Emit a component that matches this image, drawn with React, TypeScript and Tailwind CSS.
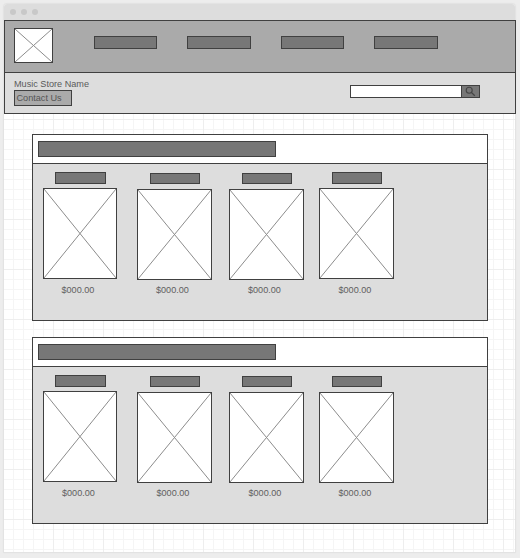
import React from "react";

type Product = {
  card: string;
  label: string;
  image: string;
  price: string;
};

const frame = "border border-[#404040]";
const bar = "border border-[#404040] bg-[#777]";

function Placeholder({ className }: { className: string }) {
  return (
    <div className={`${frame} shrink-0 bg-white ${className}`}>
      <svg className="block h-full w-full" viewBox="0 0 100 100" preserveAspectRatio="none">
        <path
          d="M0 0L100 100M100 0L0 100"
          stroke="#8c8c8c"
          strokeWidth="1"
          vectorEffect="non-scaling-stroke"
          fill="none"
        />
      </svg>
    </div>
  );
}

function ProductPanel({ products, className }: { products: Product[]; className: string }) {
  return (
    <section className={`${frame} ml-[28px] h-[187px] w-[456px] bg-[#ddd] ${className}`}>
      <div className="h-[28px] bg-white pt-[6px] pl-[5px]">
        <div className={`${bar} h-[16px] w-[238px]`} />
      </div>
      <div className="flex h-[157px] items-start border-t border-[#404040] pl-[10px]">
        {products.map((p, i) => (
          <div key={i} className={`shrink-0 ${p.card}`}>
            <div className={`${bar} ${p.label}`} />
            <Placeholder className={`h-[91px] w-full ${p.image}`} />
            <p className={`h-[12px] text-[9.1px] leading-[12px] whitespace-nowrap text-[#606060] ${p.price}`}>
              $000.00
            </p>
          </div>
        ))}
      </div>
    </section>
  );
}

const featured: Product[] = [
  { card: "w-[74px] pt-[8px]", label: "ml-[12px] h-[12px] w-[51px]", image: "mt-[4px]", price: "mt-[5px] pl-[18.5px]" },
  { card: "ml-[20px] w-[75px] pt-[9px]", label: "ml-[13px] h-[11px] w-[50px]", image: "mt-[5px]", price: "mt-[4px] pl-[19px]" },
  { card: "ml-[17px] w-[75px] pt-[9px]", label: "ml-[13px] h-[11px] w-[50px]", image: "mt-[5px]", price: "mt-[4px] pl-[19px]" },
  { card: "ml-[15px] w-[75px] pt-[8px]", label: "ml-[13px] h-[12px] w-[50px]", image: "mt-[4px]", price: "mt-[5px] pl-[19.5px]" },
];

const latest: Product[] = [
  { card: "w-[74px] pt-[8px]", label: "ml-[12px] h-[12px] w-[51px]", image: "mt-[4px]", price: "mt-[5px] pl-[19px]" },
  { card: "ml-[20px] w-[75px] pt-[9px]", label: "ml-[13px] h-[11px] w-[50px]", image: "mt-[5px]", price: "mt-[4px] pl-[19.5px]" },
  { card: "ml-[17px] w-[75px] pt-[9px]", label: "ml-[13px] h-[11px] w-[50px]", image: "mt-[5px]", price: "mt-[4px] pl-[19.5px]" },
  { card: "ml-[15px] w-[75px] pt-[9px]", label: "ml-[13px] h-[11px] w-[50px]", image: "mt-[5px]", price: "mt-[4px] pl-[19.5px]" },
];

export default function App() {
  return (
    <div className="h-[558px] w-[520px] overflow-hidden bg-[#ededed] pt-[4px] pl-[4px] font-['Liberation_Sans',Arial,sans-serif]">
      <div className="h-[548px] w-[511px] rounded-t-[3px] bg-white shadow-[0_0_1px_1px_#e2e2e2]">
        <div className="flex h-[16px] items-center gap-[5px] rounded-t-[3px] bg-[#ddd] pl-[6px]">
          <span className="h-[6px] w-[6px] rounded-full bg-[#c8c8c8]" />
          <span className="h-[6px] w-[6px] rounded-full bg-[#c8c8c8]" />
          <span className="h-[6px] w-[6px] rounded-full bg-[#c8c8c8]" />
        </div>
        <header className={`${frame} h-[94px] w-[512px]`}>
          <div className="flex h-[52px] items-start border-b border-[#404040] bg-[#aaa] pl-[9px]">
            <Placeholder className="mt-[7px] h-[35px] w-[39px]" />
            <nav className="mt-[15px] ml-[41px] flex gap-[30px]">
              <div className={`${bar} h-[13px] w-[63px]`} />
              <div className={`${bar} h-[13px] w-[64px]`} />
              <div className={`${bar} h-[13px] w-[63px]`} />
              <div className={`${bar} h-[13px] w-[64px]`} />
            </nav>
          </div>
          <div className="flex h-[40px] items-start bg-[#ddd] pl-[9px]">
            <div className="w-[336px] pt-[5px]">
              <h1 className="h-[12px] text-[9.15px] leading-[12px] whitespace-nowrap text-[#5a5a5a]">Music Store Name</h1>
              <div className={`${frame} h-[16px] w-[58px] bg-[#aaa] pl-[1.5px] text-[9.15px] leading-[14px] whitespace-nowrap text-[#555]`}>
                Contact Us
              </div>
            </div>
            <div className={`${frame} mt-[12px] flex h-[13px] w-[130px] bg-white`}>
              <div className="w-[110px]" />
              <div className="flex w-[18px] items-center justify-center border-l border-[#404040] bg-[#777]">
                <svg className="h-[11px] w-[11px]" viewBox="0 0 11 11" fill="none" stroke="#444">
                  <circle cx="4.2" cy="4.2" r="3" strokeWidth="1.1" />
                  <path d="M6.4 6.4L9.8 9.8" strokeWidth="1.3" />
                </svg>
              </div>
            </div>
          </div>
        </header>
        <main className="h-[438px] bg-[linear-gradient(to_right,#eeeeee_1px,transparent_1px),linear-gradient(to_bottom,#eeeeee_1px,transparent_1px),linear-gradient(to_right,#f5f5f5_1px,transparent_1px),linear-gradient(to_bottom,#f5f5f5_1px,transparent_1px)] bg-[length:50px_50px,50px_50px,10px_10px,10px_10px] bg-[position:49px_5px,49px_5px,9px_5px,9px_5px] pt-[20px]">
          <ProductPanel products={featured} className="" />
          <ProductPanel products={latest} className="mt-[16px]" />
        </main>
      </div>
    </div>
  );
}
